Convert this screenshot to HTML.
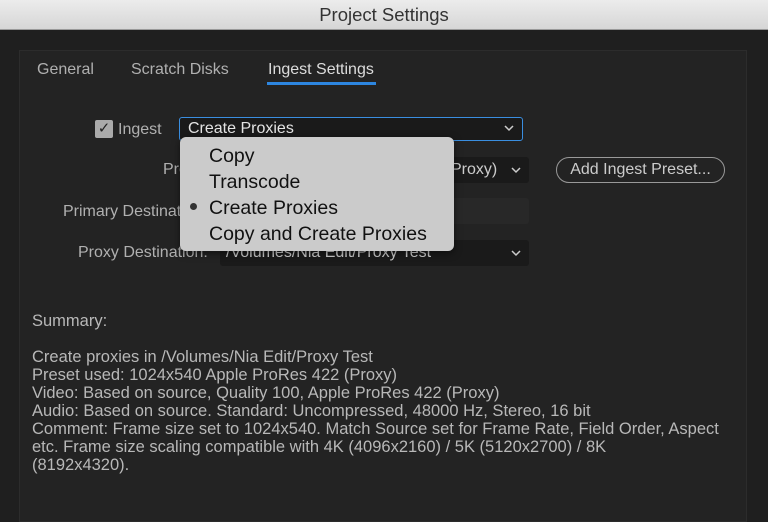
<!DOCTYPE html><html><head><style>
body{margin:0;width:768px;height:513px;overflow:hidden;background:#1f1f1f;font-family:"Liberation Sans",sans-serif;position:relative}
.a{position:absolute;white-space:nowrap}
.t{background:linear-gradient(#ececec,#d6d6d6);height:29px;left:0;top:0;width:768px;border-bottom:1px solid #999}
.lab{color:#b0b0b0;font-size:16px}
.dd{background:#1a1a1a;border-radius:3px}
.chev{position:absolute;right:8px;top:8px}
</style></head><body>
<div class="a t"></div>
<div class="a" style="left:0;width:768px;top:4px;text-align:center;font-size:18.5px;color:#333">Project Settings</div>
<div class="a" style="left:19px;top:50px;width:726px;height:470px;background:#232323;border:1px solid #2c2c2c"></div>
<div class="a lab" style="left:37px;top:61px">General</div>
<div class="a lab" style="left:131px;top:61px">Scratch Disks</div>
<div class="a" style="left:268px;top:61px;font-size:16px;color:#dcdcdc">Ingest Settings</div>
<div class="a" style="left:267px;top:82px;width:109px;height:3px;background:#2d86e0"></div>
<div class="a" style="left:95px;top:120px;width:18px;height:18px;background:#aaa;border-radius:2px;color:#222;font-size:15px;text-align:center;line-height:18px">✓</div>
<div class="a lab" style="left:118px;top:121px">Ingest</div>
<div class="a dd" style="left:179px;top:117px;width:342px;height:22px;border:1px solid #3a8ee0"><span class="a" style="left:8px;top:2px;font-size:16px;color:#e4e4e4">Create Proxies</span><svg class="chev" style="top:7px" width="10" height="7"><path d="M1 1l4 4 4-4" fill="none" stroke="#ccc" stroke-width="1.5"/></svg></div>
<div class="a lab" style="left:163px;top:161px">Pre</div>
<div class="a dd" style="left:215px;top:157px;width:314px;height:26px"><span class="a" style="left:236px;top:4px;font-size:16px;color:#ccc">Proxy)</span><svg class="chev" style="top:10px" width="10" height="7"><path d="M1 1l4 4 4-4" fill="none" stroke="#ccc" stroke-width="1.5"/></svg></div>
<div class="a" style="left:556px;top:157px;width:167px;height:24px;border:1.5px solid #999;border-radius:13px;color:#ccc;font-size:16px;text-align:center;line-height:24px">Add Ingest Preset...</div>
<div class="a lab" style="left:63px;top:203px">Primary Destination:</div>
<div class="a dd" style="left:220px;top:198px;width:309px;height:26px;background:#282828"></div>
<div class="a lab" style="left:78px;top:244px">Proxy Destination:</div>
<div class="a dd" style="left:220px;top:240px;width:309px;height:26px"><span class="a" style="left:6px;top:4px;font-size:16px;color:#ccc">/Volumes/Nia Edit/Proxy Test</span><svg class="chev" style="top:10px" width="10" height="7"><path d="M1 1l4 4 4-4" fill="none" stroke="#ccc" stroke-width="1.5"/></svg></div>
<div class="a" style="left:180px;top:137px;width:274px;height:114px;background:#cbcbcb;border-radius:6px;box-shadow:0 2px 8px rgba(0,0,0,.5)"></div>
<div class="a" style="left:209px;top:143px;font-size:19.5px;color:#111;line-height:26px">Copy<br>Transcode<br>Create Proxies<br>Copy and Create Proxies</div>
<div class="a" style="left:190px;top:203px;width:7px;height:7px;border-radius:50%;background:#333"></div>
<div class="a" style="left:32px;top:312px;font-size:16.5px;color:#b8b8b8;line-height:18px">Summary:<br><br>Create proxies in /Volumes/Nia Edit/Proxy Test<br>Preset used: 1024x540 Apple ProRes 422 (Proxy)<br>Video: Based on source, Quality 100, Apple ProRes 422 (Proxy)<br>Audio: Based on source. Standard: Uncompressed, 48000 Hz, Stereo, 16 bit<br>Comment: Frame size set to 1024x540. Match Source set for Frame Rate, Field Order, Aspect<br>etc. Frame size scaling compatible with 4K (4096x2160) / 5K (5120x2700) / 8K<br>(8192x4320).</div>
</body></html>
